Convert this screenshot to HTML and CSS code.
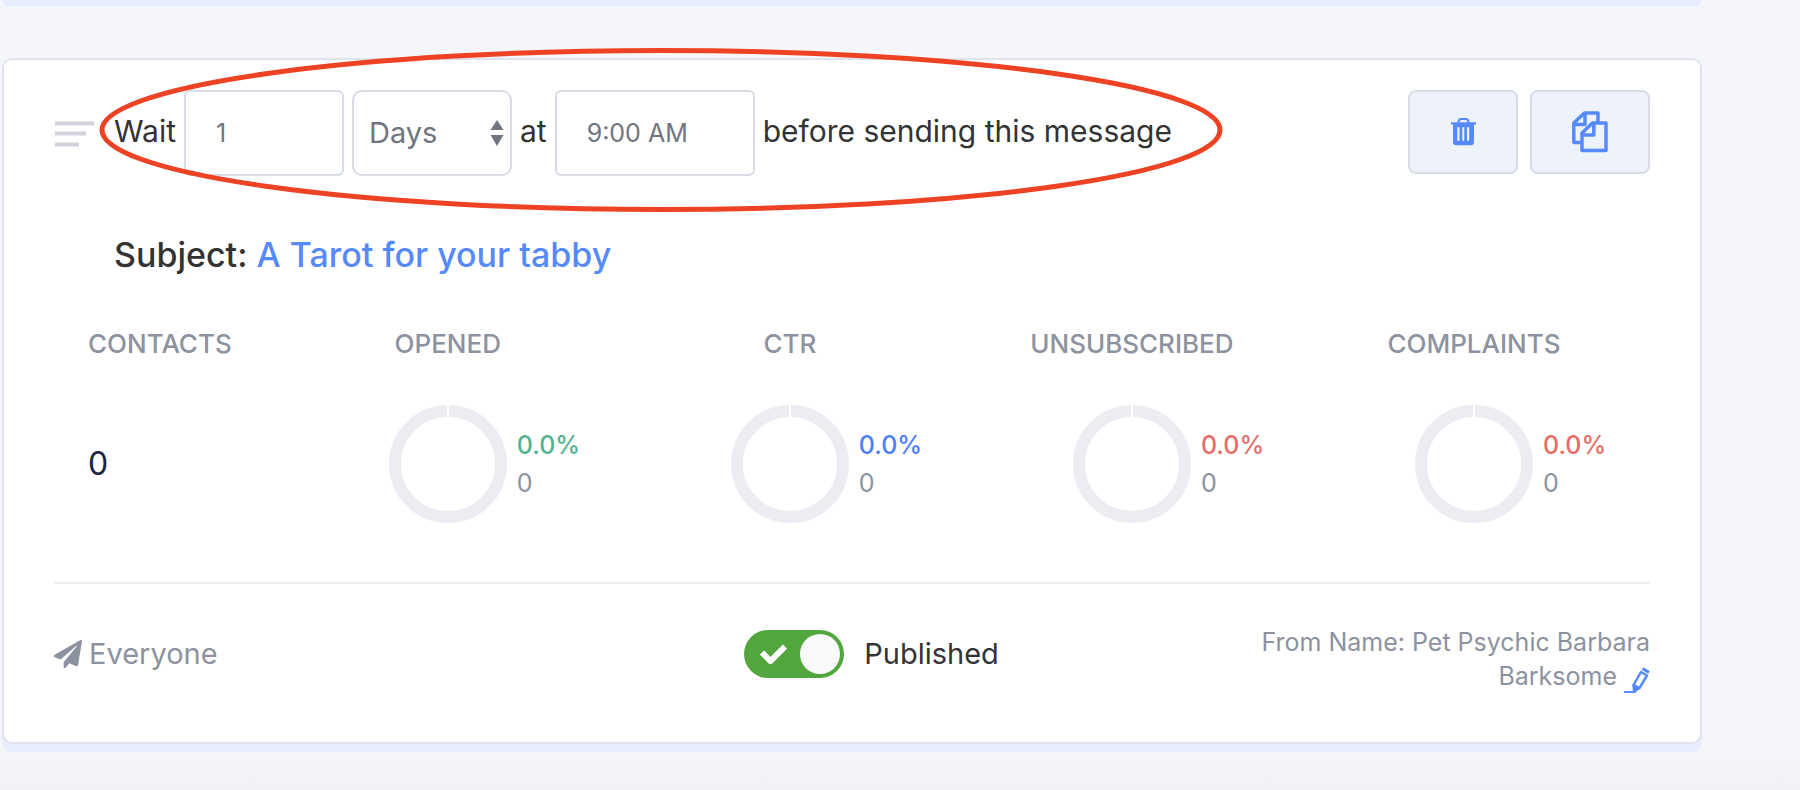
FILE: index.html
```html
<!DOCTYPE html>
<html lang="en">
<head>
<meta charset="utf-8">
<meta name="viewport" content="width=device-width, initial-scale=1">
<title>Campaign message</title>
<link rel="stylesheet" href="styles.css">
</head>
<body>
<main class="page">
  <div class="previous-card"></div>
  <article class="card">
    <form class="schedule">
      <svg class="drag-handle" viewBox="0 0 39 26" aria-hidden="true"><path d="M0 2.500h39M0 12.500h31M0 23.500h24"/></svg>
      <div class="schedule-fields">
        <label class="word" for="delay">Wait</label>
        <input class="field delay" id="delay" type="text" value="1">
        <span class="select-wrap">
          <select class="field unit" id="unit" aria-label="Unit"><option>Days</option><option>Hours</option></select>
          <svg class="select-arrows" viewBox="0 0 14 26" aria-hidden="true"><path d="M7 0l6.500 10H.5zM7 26l6.500-11H.5z"/></svg>
        </span>
        <label class="word" for="time">at</label>
        <input class="field time" id="time" type="text" value="9:00 AM">
        <span class="word">before sending this message</span>
        <svg class="highlight" viewBox="0 0 1124 164" preserveAspectRatio="none" aria-hidden="true"><ellipse cx="562" cy="82" rx="559" ry="79.500"/></svg>
      </div>
      <div class="actions">
        <button class="action delete" type="button" aria-label="Delete">
          <svg width="25" height="28" viewBox="0 0 25 28" aria-hidden="true">
            <path d="M7.500 5V3.500Q8 1 10.500 1h4Q17 1 17.500 3.500V5" fill="none" stroke="currentColor" stroke-width="2"/>
            <path fill="currentColor" fill-rule="evenodd" d="M0 4.300h25v2.200h-2V24q0 3.200-3 3.200H5Q2 27.200 2 24V6.500H0zM6.300 9.300v13.400h2.200V9.300zM11.300 9.300v13.400h2V9.300zM16 9.300v13.400h2.200V9.300z"/>
          </svg>
        </button>
        <button class="action copy" type="button" aria-label="Duplicate">
          <svg width="36" height="42" viewBox="0 0 36 42" fill="none" stroke="currentColor" stroke-width="3.500" stroke-linejoin="round" aria-hidden="true">
            <path d="M9.500 31.500H1.800V12L12.500 2H26v9.500M13 2v11.500H2M10 22l10.500-10H34v27.500H10zM21.800 12v12H10"/>
          </svg>
        </button>
      </div>
    </form>

    <h2 class="subject">Subject: <a href="#">A Tarot for your tabby</a></h2>

    <section class="stats">
      <div class="contacts">
        <h3 class="stat-title">CONTACTS</h3>
        <p class="total">0</p>
      </div>
      <div class="stat">
        <h3 class="stat-title">OPENED</h3>
        <svg class="donut" viewBox="0 0 118 118" aria-hidden="true"><circle cx="59" cy="59" r="53"/><path d="M59 0v12"/></svg>
        <p class="figures"><strong class="green">0.0%</strong><span>0</span></p>
      </div>
      <div class="stat">
        <h3 class="stat-title">CTR</h3>
        <svg class="donut" viewBox="0 0 118 118" aria-hidden="true"><circle cx="59" cy="59" r="53"/><path d="M59 0v12"/></svg>
        <p class="figures"><strong class="blue">0.0%</strong><span>0</span></p>
      </div>
      <div class="stat">
        <h3 class="stat-title">UNSUBSCRIBED</h3>
        <svg class="donut" viewBox="0 0 118 118" aria-hidden="true"><circle cx="59" cy="59" r="53"/><path d="M59 0v12"/></svg>
        <p class="figures"><strong class="red">0.0%</strong><span>0</span></p>
      </div>
      <div class="stat">
        <h3 class="stat-title">COMPLAINTS</h3>
        <svg class="donut" viewBox="0 0 118 118" aria-hidden="true"><circle cx="59" cy="59" r="53"/><path d="M59 0v12"/></svg>
        <p class="figures"><strong class="red">0.0%</strong><span>0</span></p>
      </div>
    </section>

    <footer class="card-footer">
      <div class="audience">
        <svg width="28" height="28" viewBox="0 0 512 512" aria-hidden="true"><path fill="currentColor" d="M476 3.200L12.500 270.600c-18.100 10.400-15.800 35.600 2.200 43.200L121 358.400l287.300-253.200c5.500-4.900 13.300 2.600 8.600 8.300L176 407v80.500c0 23.600 28.500 32.900 42.500 15.800L282 426l124.600 52.200c14.200 6 30.400-2.900 33-18.200l72-432C515 7.800 493.300-6.800 476 3.200z"/></svg>
        <span>Everyone</span>
      </div>
      <label class="publish" for="published">
        <span class="switch">
          <input id="published" type="checkbox" role="switch" checked>
          <svg class="tick" viewBox="0 0 27 20" aria-hidden="true"><path d="M2 8.500l8.500 8.500L25 2.500"/></svg>
        </span>
        <span>Published</span>
      </label>
      <p class="sender">From Name: Pet Psychic Barbara Barksome
        <a class="edit" href="#" aria-label="Edit sender"><svg width="26" height="26" viewBox="0 0 26 26" fill="none" stroke="currentColor" stroke-linejoin="round" aria-hidden="true"><path d="M0 25h12" stroke-width="2"/><path d="M9.500 18L17 5l6 3.500-7.500 12.500z" stroke-width="2.500"/><path d="M18.500 1.500l6.500 4" stroke-width="3"/><path d="M9.300 18.500l5.700 3-5 3.500z" fill="currentColor" stroke-width="2"/></svg></a>
      </p>
    </footer>
  </article>
</main>
</body>
</html>
```
FILE: styles.css
```css
* {
  box-sizing: border-box;
}

body {
  margin: 0;
  min-height: 100vh;
  background: linear-gradient(to top, #f1f2f6, #f5f6fa 40px);
  color: #333;
  font-family: Inter, "Open Sans", sans-serif;
  font-size: 29px;
  line-height: 38px;
}

h2,
h3,
p {
  margin: 0;
  font-weight: 500;
}

a {
  color: #568afc;
  text-decoration: none;
}

.page {
  display: flex;
  flex-direction: column;
  gap: 52px;
  padding: 0 98px 38px 2px;
}

.previous-card {
  height: 6px;
  border-radius: 0 0 10px 10px;
  background: #e8eeff;
}

.card {
  padding: 30px 50px 49px;
  border: 2px solid #dfe4ec;
  border-radius: 10px;
  background: #fff;
  box-shadow: 0 8px 0 #e8eeff;
}

.schedule {
  display: flex;
  align-items: flex-start;
}

.drag-handle {
  width: 39px;
  height: 26px;
  margin: 31px 20px 0 1px;
  stroke: #d2d3da;
  stroke-width: 4;
}

.schedule-fields {
  position: relative;
  display: flex;
  align-items: center;
  gap: 8px;
  margin-right: auto;
}

.word {
  padding-bottom: 4px;
  font-size: 30px;
}

.highlight {
  position: absolute;
  top: -42px;
  left: -15px;
  width: 1124px;
  height: 164px;
  fill: none;
  stroke: #ee4224;
  stroke-width: 5;
  pointer-events: none;
}

.field {
  height: 86px;
  border: 2px solid #d8dde5;
  border-radius: 6px;
  background: #fff;
  color: #70757f;
  font: inherit;
  font-size: 25px;
}

.delay {
  width: 160px;
  padding: 0 30px;
}

.time {
  width: 200px;
  padding: 0 30px;
}

.select-wrap {
  position: relative;
}

.unit {
  display: block;
  width: 160px;
  padding: 0 15px;
  border-radius: 10px;
  font-size: 29px;
  appearance: none;
}

.select-arrows {
  position: absolute;
  top: 30px;
  right: 8px;
  width: 14px;
  height: 26px;
  fill: #70757f;
  pointer-events: none;
}

.actions {
  display: flex;
  gap: 12px;
}

.action {
  display: flex;
  align-items: center;
  justify-content: center;
  height: 84px;
  padding: 0;
  border: 2px solid #d8dde5;
  border-radius: 8px;
  background: #edf2fb;
  color: #568afc;
}

.delete {
  width: 110px;
}

.copy {
  width: 120px;
}

.subject {
  margin: 60px 0 0 60px;
  font-size: 34px;
}

.stats {
  display: grid;
  grid-template-columns: 14fr repeat(4, 21.5fr);
  margin-top: 51px;
  padding: 0 5px 59px 0;
  border-bottom: 2px solid #ededef;
}

.stat {
  display: grid;
  grid-template-columns: 1fr 118px 1fr;
  column-gap: 10px;
  row-gap: 42px;
  align-items: center;
}

.stat-title {
  grid-column: 1 / -1;
  color: #8c92a0;
  font-size: 26px;
  line-height: 38px;
  text-align: center;
}

.donut {
  grid-column: 2;
  width: 118px;
  height: 118px;
  fill: none;
  stroke: #ecedf3;
  stroke-width: 12;
}

.donut path {
  stroke: #fff;
  stroke-width: 2;
}

.figures {
  display: flex;
  flex-direction: column;
  color: #8c92a0;
  font-size: 25px;
  font-weight: 400;
}

.figures strong {
  font-weight: 500;
}

.green {
  color: #54b38c;
}

.blue {
  color: #4f7ff8;
}

.red {
  color: #e76d68;
}

.contacts {
  padding-left: 34px;
}

.contacts .stat-title {
  text-align: left;
}

.total {
  margin-top: 82px;
  color: #1b2340;
  font-size: 32px;
  font-weight: 400;
}

.card-footer {
  display: grid;
  grid-template-columns: 43fr 32fr 25fr;
  align-items: center;
  padding-top: 41px;
}

.audience {
  display: flex;
  align-items: center;
  gap: 7px;
  padding-bottom: 10px;
  color: #8c92a0;
}

.publish {
  display: flex;
  align-items: center;
  gap: 20px;
  padding: 0 0 10px 4px;
}

.switch {
  position: relative;
  display: flex;
}

.switch input {
  display: flex;
  justify-content: flex-end;
  width: 100px;
  height: 48px;
  margin: 0;
  padding: 4px;
  border-radius: 24px;
  background: #51a73e;
  appearance: none;
}

.switch input::before {
  width: 40px;
  height: 40px;
  border-radius: 50%;
  background: #fafafa;
  content: "";
}

.tick {
  position: absolute;
  top: 14px;
  left: 16px;
  width: 27px;
  height: 20px;
  fill: none;
  stroke: #fff;
  stroke-width: 6;
}

.sender {
  color: #8c92a0;
  font-size: 25px;
  font-weight: 400;
  line-height: 34px;
  text-align: right;
}

.edit svg {
  vertical-align: -8px;
}
```
